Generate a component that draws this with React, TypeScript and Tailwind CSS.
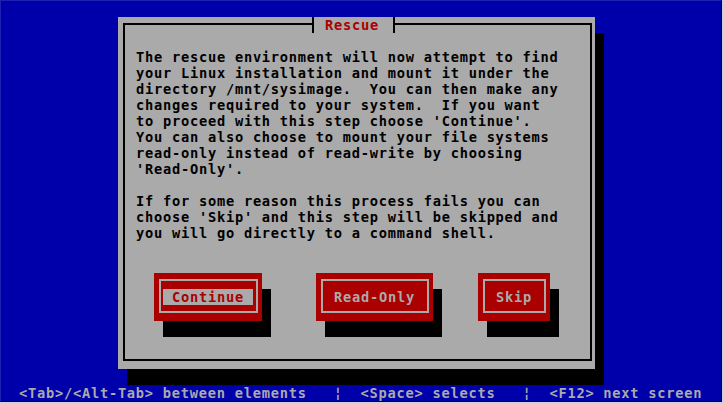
import React from "react";

const lines = [
  "The rescue environment will now attempt to find",
  "your Linux installation and mount it under the",
  "directory /mnt/sysimage.  You can then make any",
  "changes required to your system.  If you want",
  "to proceed with this step choose 'Continue'.",
  "You can also choose to mount your file systems",
  "read-only instead of read-write by choosing",
  "'Read-Only'.",
  "",
  "If for some reason this process fails you can",
  "choose 'Skip' and this step will be skipped and",
  "you will go directly to a command shell.",
];

interface TuiButtonProps {
  label: string;
  width: string;
  focused?: boolean;
}

// newt style push button: 3 text rows, gray frame drawn mid-cell, black drop shadow
const TuiButton: React.FC<TuiButtonProps> = ({ label, width, focused = false }) => {
  return (
    <div
      className={`${width} h-[48px] shrink-0 bg-[#aa0000] pt-[6px] pl-[5px] pr-[4px] pb-[8px] shadow-[9px_16px_0_0_#000000]`}
    >
      <div className="h-full border-2 border-[#aaaaaa]">
        <div
          className={`mt-[8px] ml-[2px] h-[16px] w-fit whitespace-pre ${
            focused ? "bg-[#aaaaaa] text-[#aa0000]" : "text-[#aaaaaa]"
          }`}
        >
          {" " + label + " "}
        </div>
      </div>
    </div>
  );
};

export default function App() {
  return (
    <div className="w-[724px] h-[404px] bg-[#cfd3d7]">
      <div
        className="w-[722px] h-[402px] border border-t-[#2020b0] border-l-[#2020b0] border-r-black border-b-black bg-[#0000aa] flex flex-col text-[13.7px] tracking-[0.75px] leading-[16px] font-bold"
        style={{ fontFamily: '"DejaVu Sans Mono", "Liberation Mono", monospace' }}
      >
        <div className="h-[384px] pt-[16px] pl-[117px]">
          <div className="relative w-[477px] h-[352px] bg-[#aaaaaa] pt-[6px] pl-[5px] pr-[3px] pb-[8px] shadow-[9px_16px_0_0_#000000]">
            <div className="h-full border-2 border-black pt-[24px] pl-[11px]">
              <div className="text-black whitespace-pre">
                {lines.map((l, i) => (
                  <div key={i} className="h-[16px]">
                    {l}
                  </div>
                ))}
              </div>
              <div className="flex mt-[32px] ml-[18px]">
                <TuiButton label="Continue" width="w-[108px]" focused />
                <div className="w-[54px] shrink-0" />
                <TuiButton label="Read-Only" width="w-[117px]" />
                <div className="w-[45px] shrink-0" />
                <TuiButton label="Skip" width="w-[72px]" />
              </div>
            </div>
            <div className="absolute top-0 left-[194px] w-[83px] h-[16px] border-x-2 border-black bg-[#aaaaaa] pl-[11px] text-[#aa0000] whitespace-pre">
              Rescue
            </div>
          </div>
        </div>
        <div className="h-[16px] whitespace-pre text-[#aaaaaa]">
          {"  <Tab>/<Alt-Tab> between elements   ¦  <Space> selects   ¦  <F12> next screen"}
        </div>
      </div>
    </div>
  );
}
